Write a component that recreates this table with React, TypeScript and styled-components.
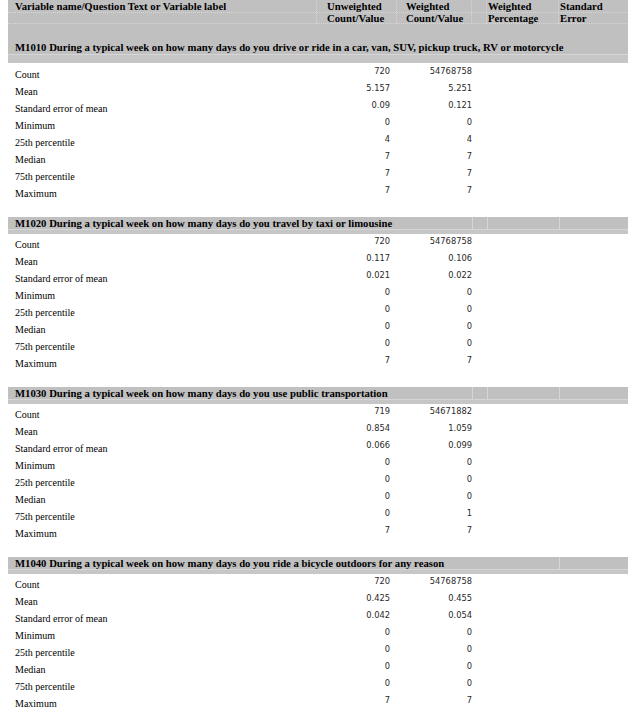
import React from 'react';
import styled, { createGlobalStyle } from 'styled-components';

const GlobalStyle = createGlobalStyle`
  body {
    margin: 0;
    padding: 0 0 0 8px;
    background: #ffffff;
    font-family: 'Liberation Serif', 'Times New Roman', serif;
    color: #000;
  }
`;

// label | unweighted | weighted | (narrow) | weighted % | std error
const COLS = '309px 80px 75px 15px 72px 69px';
const GREY = '#c0c0c0';
const RULE = '#d6d6d6';

type Row = [string, string, string];

type Section = {
  code: string;
  title: string;
  span: number;
  rows: Row[];
};

const LABELS = [
  'Count',
  'Mean',
  'Standard error of mean',
  'Minimum',
  '25th percentile',
  'Median',
  '75th percentile',
  'Maximum',
];

const build = (values: [string, string][]): Row[] => values.map((v, i) => [LABELS[i], v[0], v[1]]);

const sections: Section[] = [
  {
    code: 'M1010',
    title: 'During a typical week on how many days do you drive or ride in a car, van, SUV, pickup truck, RV or motorcycle',
    span: 6,
    rows: build([
      ['720', '54768758'],
      ['5.157', '5.251'],
      ['0.09', '0.121'],
      ['0', '0'],
      ['4', '4'],
      ['7', '7'],
      ['7', '7'],
      ['7', '7'],
    ]),
  },
  {
    code: 'M1020',
    title: 'During a typical week on how many days do you travel by taxi or limousine',
    span: 3,
    rows: build([
      ['720', '54768758'],
      ['0.117', '0.106'],
      ['0.021', '0.022'],
      ['0', '0'],
      ['0', '0'],
      ['0', '0'],
      ['0', '0'],
      ['7', '7'],
    ]),
  },
  {
    code: 'M1030',
    title: 'During a typical week on how many days do you use public transportation',
    span: 3,
    rows: build([
      ['719', '54671882'],
      ['0.854', '1.059'],
      ['0.066', '0.099'],
      ['0', '0'],
      ['0', '0'],
      ['0', '0'],
      ['0', '1'],
      ['7', '7'],
    ]),
  },
  {
    code: 'M1040',
    title: 'During a typical week on how many days do you ride a bicycle outdoors for any reason',
    span: 5,
    rows: build([
      ['720', '54768758'],
      ['0.425', '0.455'],
      ['0.042', '0.054'],
      ['0', '0'],
      ['0', '0'],
      ['0', '0'],
      ['0', '0'],
      ['7', '7'],
    ]),
  },
];

const headTop = ['Variable name/Question Text or Variable label', 'Unweighted', 'Weighted', '', 'Weighted', 'Standard'];
const headBottom = ['', 'Count/Value', 'Count/Value', '', 'Percentage', 'Error'];
const headPad = [7, 10, 9, 0, 1, 1];

const Sheet = styled.div`
  width: 620px;
`;

const HeadRow = styled.div<{ $h: number; $top: number }>`
  display: grid;
  grid-template-columns: ${COLS};
  height: ${(p) => p.$h}px;
  padding-top: ${(p) => p.$top}px;
  box-sizing: border-box;
  background: ${GREY};
  border-bottom: 1px dotted ${RULE};
`;

const HeadCell = styled.div<{ $pad: number }>`
  padding-left: ${(p) => p.$pad}px;
  font-size: 10.7px;
  font-weight: bold;
  line-height: 11px;
  white-space: nowrap;
  border-right: 1px dotted ${RULE};
  &:last-child {
    border-right: none;
  }
`;

const GreySpacer = styled.div<{ $h: number }>`
  height: ${(p) => p.$h}px;
  background: ${GREY};
`;

const Block = styled.div<{ $first: boolean }>`
  margin-top: ${(p) => (p.$first ? 0 : 16)}px;
`;

const TitleRow = styled.div<{ $tall: boolean }>`
  display: grid;
  grid-template-columns: ${COLS};
  height: ${(p) => (p.$tall ? 16 : 12)}px;
  background: ${GREY};
  border-bottom: 1px solid ${RULE};
`;

const TitleCell = styled.div<{ $span: number; $tall: boolean }>`
  grid-column: span ${(p) => p.$span};
  padding-left: 7px;
  font-size: 10.7px;
  font-weight: bold;
  line-height: ${(p) => (p.$tall ? 18 : 13)}px;
  white-space: nowrap;
`;

const TitleFill = styled.div`
  border-left: 1px solid ${RULE};
`;

const Strip = styled.div<{ $h: number }>`
  height: ${(p) => p.$h}px;
  background: #c6c6c6;
`;

const Rows = styled.div<{ $first: boolean }>`
  padding-top: ${(p) => (p.$first ? 2 : 1)}px;
`;

const DataRow = styled.div`
  display: grid;
  grid-template-columns: ${COLS};
  height: 17px;
`;

const Label = styled.div`
  padding: 3px 0 0 7px;
  font-size: 10px;
  line-height: 14px;
  white-space: nowrap;
`;

const Num = styled.div<{ $right: number }>`
  padding-right: ${(p) => p.$right}px;
  text-align: right;
  font-family: 'DejaVu Sans', 'Liberation Sans', sans-serif;
  font-size: 8.3px;
  line-height: 12px;
  color: #2a2a2a;
`;

const SectionBlock = ({ section, first }: { section: Section; first: boolean }) => (
  <Block $first={first}>
    <TitleRow $tall={first}>
      <TitleCell $span={section.span} $tall={first}>
        {section.code} {section.title}
      </TitleCell>
      {Array.from({ length: 6 - section.span }).map((_, i) => (
        <TitleFill key={i} />
      ))}
    </TitleRow>
    <Strip $h={first ? 8 : 4} />
    <Rows $first={first}>
      {section.rows.map(([label, unweighted, weighted]) => (
        <DataRow key={label}>
          <Label>{label}</Label>
          <Num $right={7}>{unweighted}</Num>
          <Num $right={0}>{weighted}</Num>
          <div />
          <div />
          <div />
        </DataRow>
      ))}
    </Rows>
  </Block>
);

const App = () => {
  return (
    <>
      <GlobalStyle />
      <Sheet>
        <HeadRow $h={13} $top={1}>
          {headTop.map((t, i) => (
            <HeadCell key={i} $pad={headPad[i]}>
              {t}
            </HeadCell>
          ))}
        </HeadRow>
        <HeadRow $h={11} $top={0}>
          {headBottom.map((t, i) => (
            <HeadCell key={i} $pad={headPad[i]}>
              {t}
            </HeadCell>
          ))}
        </HeadRow>
        <GreySpacer $h={14} />
        {sections.map((s, i) => (
          <SectionBlock key={s.code} section={s} first={i === 0} />
        ))}
      </Sheet>
    </>
  );
};

export default App;
